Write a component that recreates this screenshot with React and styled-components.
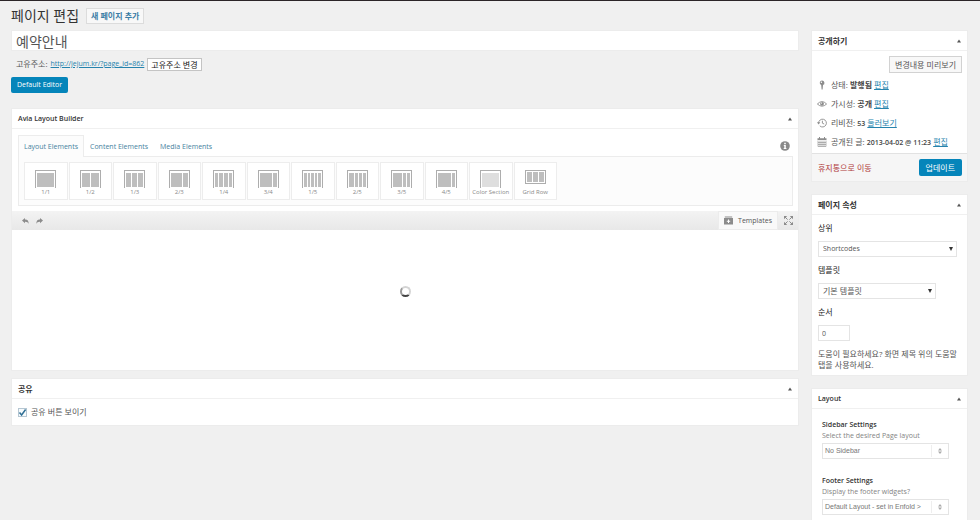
import * as React from "react";
import styled, { createGlobalStyle, keyframes } from "styled-components";

const COLOR = {
  page: "#f0f0f0",
  white: "#ffffff",
  line: "#ececec",
  field: "#e4e4e4",
  text: "#555555",
  dark: "#333333",
  muted: "#848484",
  link: "#2583ad",
  tab: "#4682a0",
  primary: "#0585ba",
  danger: "#b03a3a",
  icon: "#8c8c8c",
  shape: "#bebebe"
};

const LAYOUTS = [
  { label: "1/1", columns: [17] },
  { label: "1/2", columns: [8, 8] },
  { label: "1/3", columns: [5, 5, 5] },
  { label: "2/3", columns: [11, 5] },
  { label: "1/4", columns: [3, 4, 4, 3] },
  { label: "3/4", columns: [12, 4] },
  { label: "1/5", columns: [3, 2, 3, 2, 3] },
  { label: "2/5", columns: [5, 3, 3, 3] },
  { label: "3/5", columns: [9, 3, 3] },
  { label: "4/5", columns: [13, 3] },
  { label: "Color Section", columns: [17], light: true },
  { label: "Grid Row", columns: [5, 5, 5], closed: true }
];

const LayoutIcon = ({ columns, light, closed }) => {
  let x = 2;
  return (
    <svg width="21" height="18" viewBox="0 0 21 18" shapeRendering="crispEdges">
      <path
        d={closed ? "M.5 .5H20.5V13.5H.5Z" : "M.5 18V.5H20.5V18"}
        fill="none"
        stroke="#adadad"
      />
      {columns.map((width, index) => {
        const left = x;
        x += width + 1;
        return (
          <rect
            key={index}
            x={left}
            y={closed ? 2 : 3}
            width={width}
            height={closed ? 10 : 14}
            fill={light ? "#dedede" : COLOR.shape}
          />
        );
      })}
    </svg>
  );
};

const PinIcon = () => (
  <svg width="10" height="10" viewBox="0 0 10 10" fill={COLOR.icon}>
    <path d="M5 .5a2.4 2.4 0 0 1 1 4.6L5.6 9.5H4.6L4.2 5.1A2.4 2.4 0 0 1 5 .5Z" />
    <circle cx="4.4" cy="2.3" r=".7" fill="#fff" />
  </svg>
);

const EyeIcon = () => (
  <svg width="10" height="10" viewBox="0 0 10 10" fill="none" stroke={COLOR.icon}>
    <path d="M.4 5Q5 .2 9.6 5Q5 9.4 .4 5Z" strokeWidth=".9" />
    <circle cx="5" cy="4.8" r="1.9" fill={COLOR.icon} stroke="none" />
    <circle cx="4.4" cy="4.1" r=".6" fill="#fff" stroke="none" />
  </svg>
);

const HistoryIcon = () => (
  <svg width="10" height="10" viewBox="0 0 10 10" fill="none" stroke={COLOR.icon}>
    <path d="M1.6 5A3.9 3.9 0 1 1 2.8 7.9M5.4 2.7V5.2L7.2 6" strokeWidth=".9" />
    <path d="M0 4.3H3.3L1.6 6.5Z" fill={COLOR.icon} stroke="none" />
  </svg>
);

const CalendarIcon = () => (
  <svg width="10" height="10" viewBox="0 0 10 10" fill={COLOR.icon}>
    <path d="M.5 1.2H9.5V3H.5ZM2 0H3V1.5H2ZM7 0H8V1.5H7Z" />
    <path
      d="M1 3.5V9.5H9V3.5M3 3.5V9.5M5 3.5V9.5M7 3.5V9.5M1 5.5H9M1 7.5H9"
      fill="none"
      stroke={COLOR.icon}
      strokeWidth=".6"
    />
  </svg>
);

const UndoIcon = ({ flip }) => (
  <svg width="7" height="6" viewBox="0 0 7 6" fill={COLOR.icon}>
    <path
      transform={flip ? "matrix(-1 0 0 1 7 0)" : undefined}
      d="M0 2.6L3 0V1.6C5.5 1.5 6.8 3 6.6 6C6 4.4 5 3.7 3 3.8V5.2Z"
    />
  </svg>
);

const InfoIcon = () => (
  <svg width="10" height="10" viewBox="0 0 10 10">
    <circle cx="5" cy="5" r="4.8" fill="#8a8a8a" />
    <path d="M4.2 1.8H5.8V3.2H4.2ZM3.8 4H5.8V7H6.4V8H3.7V7H4.3V5H3.8Z" fill="#fff" />
  </svg>
);

const TemplateIcon = () => (
  <svg width="9" height="9" viewBox="0 0 9 9">
    <path d="M.8 .5H8.2V1.5H.8ZM0 2H9V8.5H0Z" fill={COLOR.icon} />
    <path d="M4 3.5H5V4.7H6.2V5.7H5V7H4V5.7H2.8V4.7H4Z" fill="#fff" />
  </svg>
);

const ExpandIcon = () => (
  <svg width="9" height="9" viewBox="0 0 9 9">
    <path
      d="M0 0H3.2L0 3.2ZM9 0V3.2L5.8 0ZM0 9V5.8L3.2 9ZM9 9H5.8L9 5.8Z"
      fill={COLOR.icon}
    />
    <path
      d="M1 1L3.6 3.6M8 1L5.4 3.6M1 8L3.6 5.4M8 8L5.4 5.4"
      stroke={COLOR.icon}
      strokeWidth="1"
    />
  </svg>
);

const Toggle = ({ title }) => (
  <ToggleButton aria-label={title}>
    <svg width="4" height="4" viewBox="0 0 4 4">
      <path d="M0 3.6L2 .4L4 3.6Z" fill="#555" />
    </svg>
  </ToggleButton>
);

const Panel = ({ title, korean, children }) => (
  <Box>
    <BoxHeader>
      <BoxTitle $korean={korean}>{title}</BoxTitle>
      <Toggle title={title} />
    </BoxHeader>
    {children}
  </Box>
);

const Dropdown = ({ id, value, width, korean }) => (
  <SelectWrap $width={width}>
    <Select id={id} defaultValue={value} $korean={korean}>
      <option>{value}</option>
    </Select>
    <SelectMark>
      <svg width="4" height="4" viewBox="0 0 4 4">
        <path d="M0 0H4L2 4Z" fill="#333" />
      </svg>
    </SelectMark>
  </SelectWrap>
);

const Setting = ({ id, title, description, value }) => (
  <SettingGroup>
    <SettingTitle htmlFor={id}>{title}</SettingTitle>
    <Description>{description}</Description>
    <SelectWrap $width="127px">
      <Select id={id} defaultValue={value} $plain>
        <option>{value}</option>
      </Select>
      <SelectMark $divided>
        <svg width="4" height="6" viewBox="0 0 4 6">
          <path d="M0 2.4L2 0L4 2.4ZM0 3.6H4L2 6Z" fill="#aaa" />
        </svg>
      </SelectMark>
    </SelectWrap>
  </SettingGroup>
);

const App = () => (
  <Page>
    <GlobalStyle />
    <Heading>
      <PageTitle>페이지 편집</PageTitle>
      <AddLink href="#new">새 페이지 추가</AddLink>
    </Heading>
    <Columns>
      <Main>
        <TitleInput aria-label="제목" defaultValue="예약안내" />
        <Permalink>
          <span>고유주소:</span>
          <UrlLink href="#permalink">http://jejum.kr/?page_id=862</UrlLink>
          <SmallButton>고유주소 변경</SmallButton>
        </Permalink>
        <EditorButton>Default Editor</EditorButton>

        <Panel title="Avia Layout Builder">
          <Builder>
            <Tabs>
              <Tab $active>Layout Elements</Tab>
              <Tab>Content Elements</Tab>
              <Tab>Media Elements</Tab>
              <InfoButton aria-label="Info">
                <InfoIcon />
              </InfoButton>
            </Tabs>
            <Shelf>
              <Elements>
                {LAYOUTS.map(item => (
                  <Element key={item.label}>
                    <LayoutIcon {...item} />
                    <ElementLabel>{item.label}</ElementLabel>
                  </Element>
                ))}
              </Elements>
            </Shelf>
          </Builder>
          <Toolbar>
            <IconButton aria-label="Undo">
              <UndoIcon />
            </IconButton>
            <IconButton aria-label="Redo">
              <UndoIcon flip />
            </IconButton>
            <TemplatesButton>
              <TemplateIcon />
              Templates
            </TemplatesButton>
            <ExpandButton aria-label="Fullscreen">
              <ExpandIcon />
            </ExpandButton>
          </Toolbar>
          <Canvas>
            <Spinner />
          </Canvas>
        </Panel>

        <Panel title="공유" korean>
          <ShareLabel>
            <Checkbox type="checkbox" defaultChecked />
            <Tick width="9" height="9" viewBox="0 0 9 9">
              <path d="M1.5 4.5L3.6 7L7.6 1.5" fill="none" stroke="#2f6f95" strokeWidth="1.5" />
            </Tick>
            <span>공유 버튼 보이기</span>
          </ShareLabel>
        </Panel>
      </Main>

      <Side>
        <Panel title="공개하기" korean>
          <PreviewRow>
            <PreviewButton>변경내용 미리보기</PreviewButton>
          </PreviewRow>
          <StatusList>
            <Status>
              <PinIcon />
              <span>
                상태: <b>발행됨</b> <Link href="#status">편집</Link>
              </span>
            </Status>
            <Status>
              <EyeIcon />
              <span>
                가시성: <b>공개</b> <Link href="#visibility">편집</Link>
              </span>
            </Status>
            <Status>
              <HistoryIcon />
              <span>
                리비전: <Figure>53</Figure> <Link href="#revisions">둘러보기</Link>
              </span>
            </Status>
            <Status>
              <CalendarIcon />
              <span>
                공개된 글: <Figure>2013-04-02 @ 11:23</Figure>{" "}
                <Link href="#date">편집</Link>
              </span>
            </Status>
          </StatusList>
          <PublishFooter>
            <TrashLink href="#trash">휴지통으로 이동</TrashLink>
            <UpdateButton>업데이트</UpdateButton>
          </PublishFooter>
        </Panel>

        <Panel title="페이지 속성" korean>
          <Attributes>
            <FieldLabel htmlFor="parent">상위</FieldLabel>
            <Dropdown id="parent" value="Shortcodes" width="139px" />
            <FieldLabel htmlFor="template">템플릿</FieldLabel>
            <Dropdown id="template" value="기본 템플릿" width="118px" korean />
            <FieldLabel htmlFor="order">순서</FieldLabel>
            <OrderInput id="order" defaultValue="0" />
            <Help>도움이 필요하세요? 화면 제목 위의 도움말 탭을 사용하세요.</Help>
          </Attributes>
        </Panel>

        <Panel title="Layout">
          <Settings>
            <Setting
              id="sidebar"
              title="Sidebar Settings"
              description="Select the desired Page layout"
              value="No Sidebar"
            />
            <Setting
              id="footer"
              title="Footer Settings"
              description="Display the footer widgets?"
              value="Default Layout - set in Enfold >"
            />
          </Settings>
        </Panel>
      </Side>
    </Columns>
  </Page>
);

const GlobalStyle = createGlobalStyle`
  * {
    box-sizing: border-box;
  }

  body {
    margin: 0;
    background: ${COLOR.page};
    color: ${COLOR.text};
    font: 8px/12px "Open Sans", "Noto Sans CJK KR", sans-serif;
  }

  button, input, select {
    margin: 0;
    padding: 0;
    border: 0;
    border-radius: 0;
    background: none;
    color: inherit;
    font: inherit;
  }

  h1, h2, p, ul {
    margin: 0;
    padding: 0;
  }

  svg {
    display: block;
    flex: none;
  }

  b {
    font-weight: 600;
    color: #444444;
  }
`;

const Page = styled.div`
  border-top: 1px solid #2b2528;
  padding: 0 12px 0 11px;
`;

const Heading = styled.header`
  display: flex;
  align-items: center;
  gap: 7px;
  height: 29px;
`;

const PageTitle = styled.h1`
  font-size: 14px;
  font-weight: 400;
  line-height: 20px;
  color: ${COLOR.dark};
`;

const AddLink = styled.a`
  padding: 1px 4px;
  border: 1px solid #dcdcdc;
  background: #f8f8f8;
  color: #3a7ca5;
  font-weight: 600;
  text-decoration: none;
`;

const Columns = styled.div`
  display: grid;
  grid-template-columns: minmax(0, 1fr) 157px;
  gap: 12px;
`;

const Main = styled.main`
  display: flex;
  flex-direction: column;
  gap: 7px;
`;

const Side = styled.aside`
  display: flex;
  flex-direction: column;
  gap: 12px;
`;

const TitleInput = styled.input`
  width: 100%;
  height: 21px;
  padding: 0 4px;
  border: 1px solid ${COLOR.line};
  background: ${COLOR.white};
  color: ${COLOR.text};
  font-size: 14px;
`;

const Permalink = styled.div`
  display: flex;
  align-items: center;
  gap: 3px;
  height: 12px;
  padding-left: 5px;
`;

const Link = styled.a`
  color: ${COLOR.link};
`;

const UrlLink = styled(Link)`
  font-size: 7px;
`;

const SmallButton = styled.button`
  flex: none;
  height: 13px;
  padding: 0 3px;
  border: 1px solid #c4c4c4;
  background: ${COLOR.white};
  color: #111111;
  line-height: 11px;
`;

const PrimaryButton = styled.button`
  border-radius: 2px;
  background: ${COLOR.primary};
  color: ${COLOR.white};
`;

const EditorButton = styled(PrimaryButton)`
  align-self: flex-start;
  height: 16px;
  margin: 0 0 8px;
  padding: 0 6px;
  font-size: 7px;
`;

const Box = styled.section`
  border: 1px solid ${COLOR.line};
  background: ${COLOR.white};
`;

const BoxHeader = styled.div`
  display: flex;
  align-items: center;
  justify-content: space-between;
  height: 20px;
  padding: 0 5px 0 6px;
  border-bottom: 1px solid #f0f0f0;
`;

const BoxTitle = styled.h2`
  font-size: ${props => (props.$korean ? 8 : 7)}px;
  font-weight: 600;
  color: ${COLOR.dark};
`;

const ToggleButton = styled.button`
  padding: 1px;
`;

const Builder = styled.div`
  padding: 6px 5px 5px 6px;
`;

const Tabs = styled.div`
  display: flex;
  align-items: stretch;
  height: 21px;
`;

const Tab = styled.button`
  height: 22px;
  padding: 0 5px;
  border: 1px solid ${props => (props.$active ? COLOR.line : "transparent")};
  border-bottom: 0;
  background: ${props => (props.$active ? "#fcfcfc" : "transparent")};
  color: ${COLOR.tab};
  font-size: 7px;
`;

const InfoButton = styled.button`
  margin-left: auto;
  padding: 0 3px;
`;

const Shelf = styled.div`
  padding: 5px;
  border: 1px solid ${COLOR.line};
  background: #fcfcfc;
`;

const Elements = styled.div`
  display: grid;
  grid-template-columns: repeat(12, minmax(0, 1fr));
  max-width: 534px;
`;

const Element = styled.button`
  display: flex;
  flex-direction: column;
  align-items: center;
  height: 38px;
  margin-right: 1px;
  padding-top: 7px;
  border: 1px solid #ededed;
  background: ${COLOR.white};
`;

const ElementLabel = styled.span`
  color: #8a8a8a;
  font-size: 6px;
  line-height: 8px;
  white-space: nowrap;
`;

const Toolbar = styled.div`
  display: flex;
  align-items: center;
  height: 19px;
  background: linear-gradient(#f3f3f3, #e8e8e8);
`;

const IconButton = styled.button`
  height: 19px;
  padding-left: 7px;

  &:first-child {
    padding-left: 10px;
  }
`;

const TemplatesButton = styled.button`
  display: flex;
  align-items: center;
  gap: 5px;
  height: 19px;
  margin-left: auto;
  padding: 0 5px;
  border: 1px solid ${COLOR.line};
  background: #f9f9f9;
  font-size: 7px;
`;

const ExpandButton = styled.button`
  height: 19px;
  padding: 0 5px 0 6px;
`;

const Canvas = styled.div`
  display: flex;
  justify-content: center;
  align-items: center;
  height: 140px;
  padding-bottom: 18px;
`;

const spin = keyframes`
  to {
    transform: rotate(360deg);
  }
`;

const Spinner = styled.div`
  width: 11px;
  height: 11px;
  border: 2px solid #d4d4d4;
  border-bottom-color: #444444;
  border-left-color: #999999;
  border-radius: 50%;

  &:hover {
    animation: ${spin} 1s linear infinite;
  }
`;

const ShareLabel = styled.label`
  display: flex;
  align-items: center;
  gap: 4px;
  height: 26px;
  padding: 0 6px;
`;

const Checkbox = styled.input`
  appearance: none;
  width: 9px;
  height: 9px;
  border: 1px solid #b5c6d2;
  background: #f7fbfd;

  &:not(:checked) + svg {
    visibility: hidden;
  }
`;

const Tick = styled.svg`
  margin-left: -13px;
  pointer-events: none;
`;

const PreviewRow = styled.div`
  display: flex;
  justify-content: flex-end;
  padding: 5px 5px 0;
`;

const PreviewButton = styled.button`
  height: 17px;
  padding: 0 5px;
  border: 1px solid #d2d2d2;
  background: #f8f8f8;
`;

const StatusList = styled.ul`
  display: flex;
  flex-direction: column;
  gap: 7px;
  padding: 6px 5px 5px;
  list-style: none;
`;

const Status = styled.li`
  display: flex;
  align-items: center;
  gap: 4px;
  height: 12px;
  white-space: nowrap;
`;

const Figure = styled.b`
  font-size: 7px;
`;

const PublishFooter = styled.div`
  display: flex;
  align-items: center;
  justify-content: space-between;
  height: 28px;
  padding: 0 5px 0 6px;
  border-top: 1px solid #e2e2e2;
  background: #f6f6f6;
`;

const TrashLink = styled.a`
  color: ${COLOR.danger};
  text-decoration: none;
`;

const UpdateButton = styled(PrimaryButton)`
  height: 17px;
  padding: 0 7px;
`;

const Attributes = styled.div`
  padding: 7px 6px 5px;
`;

const FieldLabel = styled.label`
  display: block;
  margin-bottom: 7px;
  color: #222222;
`;

const SelectWrap = styled.div`
  display: grid;
  align-items: center;
  width: ${props => props.$width};
  max-width: 100%;
  height: 16px;
  margin-bottom: 7px;
  border: 1px solid ${COLOR.field};
`;

const Select = styled.select`
  grid-area: 1 / 1;
  appearance: none;
  width: 100%;
  height: 14px;
  padding: 0 ${props => (props.$plain ? 2 : 4)}px;
  color: ${props => (props.$plain ? "#777777" : COLOR.text)};
  font-family: ${props =>
    props.$plain ? '"Liberation Sans", sans-serif' : "inherit"};
  font-size: ${props => (props.$korean ? 8 : 7)}px;
`;

const SelectMark = styled.span`
  grid-area: 1 / 1;
  justify-self: end;
  display: flex;
  align-items: center;
  height: 12px;
  padding: 0 ${props => (props.$divided ? "6px" : "3px")};
  border-left: ${props => (props.$divided ? "1px solid #eeeeee" : "0")};
  pointer-events: none;
`;

const OrderInput = styled.input`
  width: 32px;
  height: 16px;
  padding: 0 3px;
  border: 1px solid ${COLOR.field};
  font-size: 7px;
`;

const Help = styled.p`
  margin-top: 7px;
  line-height: 11px;
`;

const Settings = styled.div`
  display: flex;
  flex-direction: column;
  gap: 17px;
  padding: 11px 11px 7px 10px;
`;

const SettingGroup = styled.div`
  display: flex;
  flex-direction: column;
  font-size: 7px;

  ${SelectWrap} {
    margin: 2px 0 0;
  }
`;

const SettingTitle = styled.label`
  color: ${COLOR.dark};
  font-weight: 600;
  line-height: 10px;
`;

const Description = styled.p`
  color: ${COLOR.muted};
  line-height: 11px;
`;

export default App;
